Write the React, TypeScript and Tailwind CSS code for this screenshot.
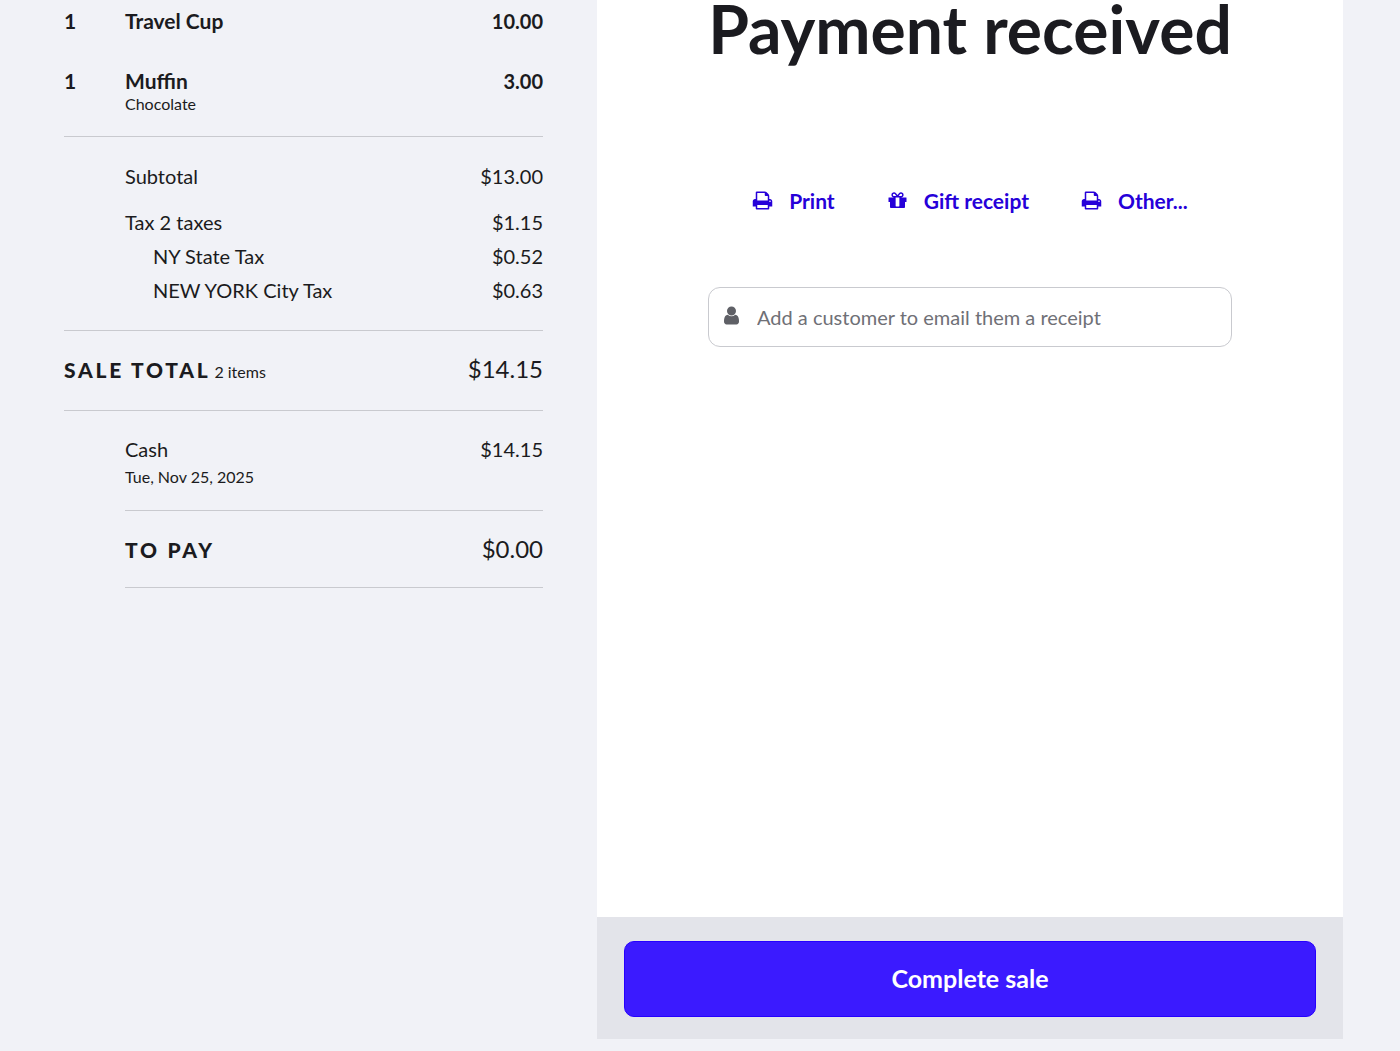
import React, { useState } from 'react';

const PrintIcon: React.FC = () => (
  <svg viewBox="0 0 1792 1792" className="mb-px size-[21px]" fill="currentColor" aria-hidden="true">
    <path d="M448 1536h896v-256h-896v256zm0-640h896v-384h-160q-40 0-68-28t-28-68v-160h-640v640zm1152 64q0-26-19-45t-45-19-45 19-19 45 19 45 45 19 45-19 19-45zm128 0v416q0 13-9.5 22.5t-22.5 9.5h-224v160q0 40-28 68t-68 28h-960q-40 0-68-28t-28-68v-160h-224q-13 0-22.5-9.5t-9.5-22.5v-416q0-79 56.5-135.5t135.5-56.5h64v-544q0-40 28-68t68-28h672q40 0 88 20t76 48l152 152q28 28 48 76t20 88v256h64q79 0 135.5 56.5t56.5 135.5z" />
  </svg>
);

const GiftIcon: React.FC = () => (
  <svg viewBox="0 0 1792 1792" className="mb-px size-[21px]" fill="currentColor" aria-hidden="true">
    <path d="M1056 1356v-716h-320v716q0 25 18 38.5t46 13.5h192q28 0 46-13.5t18-38.5zm-456-844h195l-126-161q-26-31-69-31-40 0-68 28t-28 68 28 68 68 28zm688-96q0-40-28-68t-68-28q-43 0-69 31l-125 161h194q40 0 68-28t28-68zm376 256v320q0 14-9 23t-23 9h-96v416q0 40-28 68t-68 28h-1088q-40 0-68-28t-28-68v-416h-96q-14 0-23-9t-9-23v-320q0-14 9-23t23-9h440q-93 0-158.5-65.5t-65.5-158.5 65.5-158.5 158.5-65.5q107 0 168 77l128 165 128-165q61-77 168-77 93 0 158.5 65.5t65.5 158.5-65.5 158.5-158.5 65.5h440q14 0 23 9t9 23z" />
  </svg>
);

const UserIcon: React.FC = () => (
  <svg viewBox="0 0 1792 1792" className="mb-1 size-[21px]" fill="currentColor" aria-hidden="true">
    <path d="M1536 1399q0 109-62.5 187t-150.5 78h-854q-88 0-150.5-78t-62.5-187q0-85 8.5-160.5t31.5-152 58.5-131 94-89 134.5-34.5q131 128 313 128t313-128q76 0 134.5 34.5t94 89 58.5 131 31.5 152 8.5 160.5zm-256-887q0 159-112.5 271.5t-271.5 112.5-271.5-112.5-112.5-271.5 112.5-271.5 271.5-112.5 271.5 112.5 112.5 271.5z" />
  </svg>
);

const taxes = [
  { name: 'NY State Tax', amount: '$0.52' },
  { name: 'NEW YORK City Tax', amount: '$0.63' },
];

const App: React.FC = () => {
  const [customer, setCustomer] = useState('');

  return (
    <div className="flex min-h-screen bg-[#f1f2f7] pr-[57px] font-['Lato',sans-serif] text-[#1b1b20]">
      <section className="flex w-[597px] shrink-0 flex-col pl-16 pr-[54px] text-xl">
        <div className="flex pt-[7px] text-[21px] leading-7 font-bold">
          <span className="w-[61px]">1</span>
          <span className="flex-1">Travel Cup</span>
          <span className="text-xl">10.00</span>
        </div>
        <div className="flex border-b border-[#c9cacf] pt-8 pb-[23px] text-[21px] leading-7 font-bold">
          <span className="w-[61px]">1</span>
          <div className="flex-1">
            <p>Muffin</p>
            <p className="text-base leading-[18px] font-normal">Chocolate</p>
          </div>
          <span className="text-xl">3.00</span>
        </div>

        <div className="border-b border-[#c9cacf] pt-[23px] pb-[23px] pl-[61px]">
          <div className="flex justify-between leading-8">
            <span>Subtotal</span>
            <span>$13.00</span>
          </div>
          <div className="mt-[13px] flex justify-between leading-[34px]">
            <span>Tax 2 taxes</span>
            <span>$1.15</span>
          </div>
          {taxes.map((tax) => (
            <div key={tax.name} className="flex justify-between pl-7 leading-[34px]">
              <span>{tax.name}</span>
              <span>{tax.amount}</span>
            </div>
          ))}
        </div>

        <div className="flex items-baseline border-b border-[#c9cacf] pt-[19px] pb-[21px] leading-[39px]">
          <span className="text-[21px] font-black tracking-[0.13em]">SALE TOTAL</span>
          <span className="ml-1 text-base">2 items</span>
          <span className="ml-auto text-2xl">$14.15</span>
        </div>

        <div className="ml-[61px] border-b border-[#c9cacf] pt-[22px] pb-[21px]">
          <div className="flex justify-between leading-8">
            <span>Cash</span>
            <span>$14.15</span>
          </div>
          <p className="text-base leading-6">Tue, Nov 25, 2025</p>
        </div>
        <div className="ml-[61px] flex items-baseline justify-between border-b border-[#c9cacf] pt-[21px] pb-[19px] leading-9">
          <span className="text-[21px] font-black tracking-[0.13em]">TO PAY</span>
          <span className="text-2xl">$0.00</span>
        </div>
      </section>

      <main className="mb-3 flex flex-1 flex-col bg-white">
        <div className="mx-auto flex w-[524px] flex-1 flex-col">
          <h1 className="text-center text-[66px] leading-[58px] font-bold whitespace-nowrap">Payment received</h1>
          <div className="mt-[129px] flex justify-center gap-[52px] text-[21px] leading-7 font-bold text-[#2600d9]">
            <button className="flex items-center gap-4"><PrintIcon />Print</button>
            <button className="flex items-center gap-4"><GiftIcon />Gift receipt</button>
            <button className="flex items-center gap-4"><PrintIcon />Other...</button>
          </div>
          <label className="mt-[72px] flex h-15 items-center rounded-xl border border-[#c9cacf] px-3">
            <span className="text-[#5f6066]"><UserIcon /></span>
            <input
              type="text"
              value={customer}
              onChange={(e) => setCustomer(e.target.value)}
              aria-label="Customer"
              placeholder="Add a customer to email them a receipt"
              className="ml-[15px] flex-1 text-xl outline-none placeholder:text-[#6f7076]"
            />
          </label>
        </div>
        <div className="bg-[#e3e4ea] px-[27px] pt-6 pb-[22px]">
          <button className="h-19 w-full rounded-[10px] border border-[#2600ff] bg-[#3b1aff] text-[25px] font-bold text-white">Complete sale</button>
        </div>
      </main>
    </div>
  );
};

export default App;
